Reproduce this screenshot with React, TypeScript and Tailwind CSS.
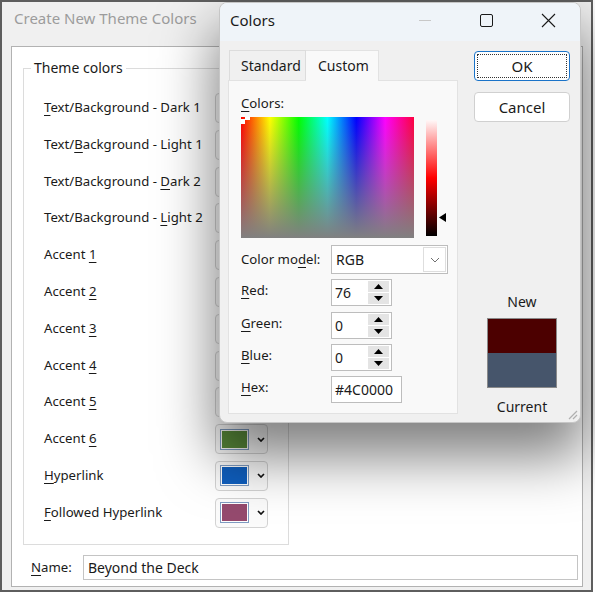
import React from 'react';

type Row = { pre: string; k: string; post: string; color: string };

const rows: Row[] = [
  { pre: '', k: 'T', post: 'ext/Background - Dark 1', color: '#000000' },
  { pre: 'Text/', k: 'B', post: 'ackground - Light 1', color: '#ffffff' },
  { pre: 'Text/Background - ', k: 'D', post: 'ark 2', color: '#44546a' },
  { pre: 'Text/Background - ', k: 'L', post: 'ight 2', color: '#e7e6e6' },
  { pre: 'Accent ', k: '1', post: '', color: '#4472c4' },
  { pre: 'Accent ', k: '2', post: '', color: '#ed7d31' },
  { pre: 'Accent ', k: '3', post: '', color: '#a5a5a5' },
  { pre: 'Accent ', k: '4', post: '', color: '#ffc000' },
  { pre: 'Accent ', k: '5', post: '', color: '#5b9bd5' },
  { pre: 'Accent ', k: '6', post: '', color: '#5a8c3b' },
  { pre: '', k: 'H', post: 'yperlink', color: '#0f5fbf' },
  { pre: '', k: 'F', post: 'ollowed Hyperlink', color: '#954a6e' },
];

const U = ({ children }: { children: React.ReactNode }) => (
  <span className="underline underline-offset-[3px] decoration-1">{children}</span>
);

const Chevron = () => (
  <svg width="8" height="5" viewBox="0 0 8 5" className="shrink-0">
    <path d="M1 1l3 3 3-3" fill="none" stroke="#111" strokeWidth="1.7" />
  </svg>
);

const SwatchButton = ({ color }: { color: string }) => (
  <div className="w-[53px] h-[30px] border border-[#d3d3d3] rounded-[4px] bg-[#fbfbfb] flex items-center pl-[4px] gap-[8px]">
    <span className="w-[29px] h-[21px] border border-[#7f9cc2] p-[1px] bg-white">
      <span className="block w-full h-full" style={{ background: color }} />
    </span>
    <Chevron />
  </div>
);

const Spin = ({ value }: { value: string }) => (
  <div className="w-[61px] h-[27px] border border-[#bdbdbd] bg-white flex items-center pl-[3px] pr-[2px]">
    <span className="flex-1 leading-[20px] text-[14px]">{value}</span>
    <div className="w-[21px] flex flex-col gap-[1px]">
      <div className="h-[11px] bg-[#e4e4e4] flex items-center justify-center">
        <svg width="9" height="5" viewBox="0 0 9 5"><path d="M4.5 0L9 5H0z" fill="#000" /></svg>
      </div>
      <div className="h-[11px] bg-[#e4e4e4] flex items-center justify-center">
        <svg width="9" height="5" viewBox="0 0 9 5"><path d="M0 0h9L4.5 5z" fill="#000" /></svg>
      </div>
    </div>
  </div>
);

const ColorsDialog = () => (
  <div className="absolute left-[219px] top-[2px] w-[362px] h-[421px] rounded-[8px] border border-[#c6c6c6] bg-[#f0f0f0] shadow-[0_30px_56px_4px_rgba(0,0,0,0.5)] overflow-hidden flex flex-col">
    <div className="h-[38px] pb-[4px] bg-[#eff4f9] flex items-center shrink-0">
      <span className="pl-[10px] text-[15px] leading-[20px] text-[#1a1a1a] flex-1">Colors</span>
      <span className="w-[12px] h-[1px] bg-[#c8c8c8] mr-[49px]" />
      <svg width="13" height="13" viewBox="0 0 13 13" className="mr-[48px]">
        <rect x="0.5" y="0.5" width="12" height="12" rx="1.5" fill="none" stroke="#1a1a1a" />
      </svg>
      <svg width="15" height="15" viewBox="0 0 15 15" className="mr-[24px]">
        <path d="M1 1l13 13M14 1L1 14" stroke="#1a1a1a" strokeWidth="1.1" />
      </svg>
    </div>
    <div className="flex flex-1 pl-[8px] pt-[8px]">
      <div className="w-[230px] flex flex-col">
        <div className="flex items-end h-[31px] pl-[1px]">
          <div className="w-[77px] h-[30px] border border-b-0 border-[#dcdcdc] bg-[#f0f0f0] pl-[11px] leading-[30px] text-[14px]">Standard</div>
          <div className="w-[73px] h-[31px] border border-b-0 border-l-0 border-[#e2e2e2] bg-[#f9f9f9] pl-[12px] leading-[30px] text-[14px] relative z-10 -mb-[1px]">Custom</div>
        </div>
        <div className="h-[334px] border border-[#e2e2e2] bg-[#f9f9f9] pl-[12px] flex flex-col">
          <div className="mt-[13px] leading-[18px]"><U>C</U>olors:</div>
          <div className="mt-[5px] flex items-start">
            <div className="w-[173px] h-[121px] bg-[linear-gradient(to_bottom,rgba(128,128,128,0),#808080),linear-gradient(to_right,#ff0000,#ffff00,#00ff00,#00ffff,#0000ff,#ff00ff,#ff0040)] relative">
              <span className="absolute left-[0px] top-[2px] w-[4px] h-[5px] bg-white" />
              <span className="absolute left-[4px] top-[0px] w-[5px] h-[3px] bg-white" />
            </div>
            <div className="ml-[12px] mt-[3px] w-[11px] h-[116px] bg-[linear-gradient(to_bottom,#fff8f8,#ff0000,#000000)]" />
            <svg width="7" height="9" viewBox="0 0 7 9" className="ml-[2px] mt-[96px]"><path d="M0 4.5L7 0v9z" fill="#000" /></svg>
          </div>
          <div className="mt-[7px] flex items-center">
            <span className="w-[90px]">Color mo<U>d</U>el:</span>
            <div className="w-[117px] h-[29px] border border-[#bdbdbd] bg-white flex items-center">
              <span className="flex-1 pl-[4px] text-[14px]">RGB</span>
              <div className="w-[23px] h-[25px] border border-[#dedede] mr-[1px] flex items-center justify-center">
                <svg width="10" height="6" viewBox="0 0 10 6"><path d="M1 1l4 4 4-4" fill="none" stroke="#707070" strokeWidth="1" /></svg>
              </div>
            </div>
          </div>
          <div className="mt-[5px] flex items-start">
            <span className="w-[90px] leading-[22px]"><U>R</U>ed:</span>
            <Spin value="76" />
          </div>
          <div className="mt-[6px] flex items-start">
            <span className="w-[90px] leading-[22px]"><U>G</U>reen:</span>
            <Spin value="0" />
          </div>
          <div className="mt-[5px] flex items-start">
            <span className="w-[90px] leading-[22px]"><U>B</U>lue:</span>
            <Spin value="0" />
          </div>
          <div className="mt-[5px] flex items-start">
            <span className="w-[90px] leading-[22px]"><U>H</U>ex:</span>
            <div className="w-[71px] h-[27px] border border-[#bdbdbd] bg-white pl-[3px] leading-[25px] text-[14px]">#4C0000</div>
          </div>
        </div>
      </div>
      <div className="ml-[16px] w-[96px] flex flex-col items-center">
        <div className="mt-[2px] w-[96px] h-[30px] rounded-[4px] border border-[#1a73c8] bg-white p-[2px]">
          <div className="w-full h-full border border-dotted border-[#333] flex items-center justify-center text-[15px]">OK</div>
        </div>
        <div className="mt-[11px] w-[96px] h-[30px] rounded-[4px] border border-[#d0d0d0] bg-white flex items-center justify-center text-[15px]">Cancel</div>
        <div className="mt-[170px] leading-[20px] text-[14px]">New</div>
        <div className="mt-[6px] w-[70px] h-[70px] border border-[#8a8a8a] flex flex-col">
          <div className="h-[34px] bg-[#4c0000]" />
          <div className="flex-1 bg-[#46556b]" />
        </div>
        <div className="mt-[9px] leading-[20px] text-[14px]">Current</div>
      </div>
    </div>
    <svg width="12" height="12" viewBox="0 0 12 12" className="absolute right-[2px] bottom-[2px]">
      <path d="M11 3L3 11M11 7L7 11" stroke="#b0b0b0" strokeWidth="1.2" />
    </svg>
  </div>
);

export default function App() {
  return (
    <div className="w-[595px] h-[594px] bg-white relative overflow-hidden font-['Noto_Sans','Open_Sans',sans-serif] text-[13.2px] text-[#1a1a1a]">
      <div className="w-[593px] h-[592px] border-2 border-[#5e5e5e] bg-[#f0f0f0] flex flex-col">
        <div className="h-[44px] pl-[12px] pt-[6px] shrink-0">
          <span className="text-[15px] leading-[20px] text-[#9c9c9c]">Create New Theme Colors</span>
        </div>
        <div className="ml-[9px] mr-[8px] h-[541px] border border-[#b2b2b2] bg-white flex flex-col">
          <div className="ml-[11px] mt-[21px] w-[266px] h-[477px] border border-[#dcdcdc] flex flex-col">
            <div className="-mt-[11px] ml-[7px] px-[3px] w-fit bg-white leading-[20px] text-[14px]">Theme colors</div>
            <div className="mt-[11.6px] pl-[20px] pr-[20px] flex flex-col">
              {rows.map((r, i) => (
                <div key={i} className="h-[36.8px] flex items-center">
                  <span className="w-[171px] whitespace-nowrap">
                    {r.pre}<U>{r.k}</U>{r.post}
                  </span>
                  <SwatchButton color={r.color} />
                </div>
              ))}
            </div>
          </div>
          <div className="mt-[10px] flex items-center pl-[19px] pr-[4px]">
            <span className="w-[52px]"><U>N</U>ame:</span>
            <div className="flex-1 h-[25px] border border-[#c4c4c4] pl-[4px] leading-[23px] text-[14px]">Beyond the Deck</div>
          </div>
        </div>
      </div>
      <ColorsDialog />
    </div>
  );
}
